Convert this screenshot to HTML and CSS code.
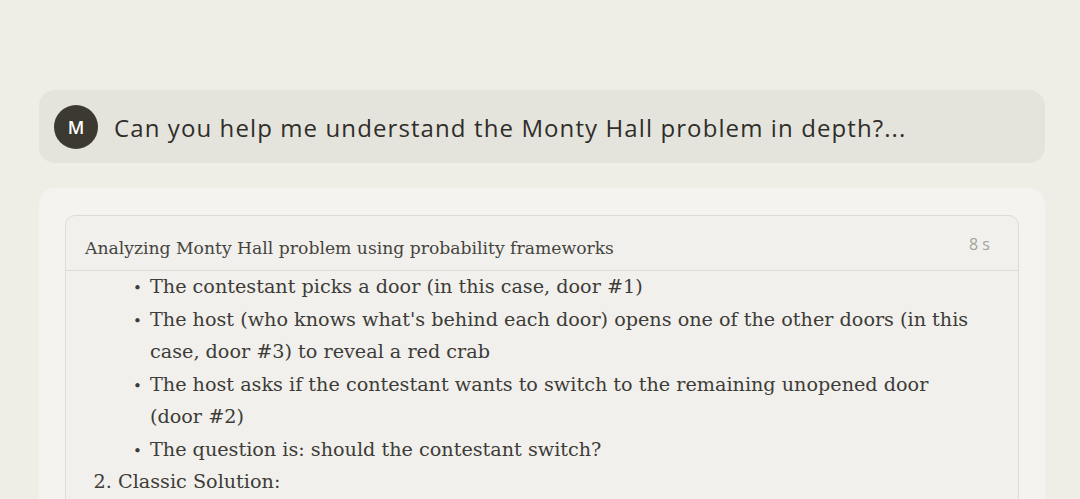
FILE: index.html
```html
<!DOCTYPE html>
<html lang="en">
<head>
  <meta charset="UTF-8">
  <title>Monty Hall</title>
  <link rel="stylesheet" href="styles.css">
</head>
<body>

  <div class="chat">
    <div class="user-msg">
      <div class="avatar">M</div>
      <div class="user-text">Can you help me understand the Monty Hall problem in depth?...</div>
    </div>

    <div class="reply">
      <div class="thinking">
        <div class="thinking-head">
          <span class="thinking-title">Analyzing Monty Hall problem using probability frameworks</span>
          <span class="thinking-time">8 s</span>
        </div>
        <div class="thinking-body">
          <ol class="steps">
            <li class="cont">
              <ul class="points">
                <li>The contestant picks a door (in this case, door #1)</li>
                <li>The host (who knows what's behind each door) opens one of the other doors (in this case, door #3) to reveal a red crab</li>
                <li>The host asks if the contestant wants to switch to the remaining unopened door (door #2)</li>
                <li>The question is: should the contestant switch?</li>
              </ul>
            </li>
            <li value="2">Classic Solution:</li>
          </ol>
        </div>
      </div>
    </div>
  </div>

</body>
</html>
```

FILE: styles.css
```css
:root {
  --page: #eeede6;
  --bubble: #e5e4dc;
  --card: #f4f3ef;
  --box: #f1f0ec;
  --line: #dcdbd4;
  --ink: #3d3c38;
  --muted: #a4a39d;
}

html, body {
  height: 100%;
}

body {
  margin: 0;
  overflow: hidden;
  background-color: var(--page);
  color: var(--ink);
}

.chat {
  padding: 90px 35px 0 39px;
  display: flex;
  flex-direction: column;
  gap: 25px;
}

.user-msg {
  display: flex;
  align-items: center;
  gap: 16px;
  height: 73px;
  padding: 0 15px;
  background-color: var(--bubble);
  border-radius: 16px;
}

.avatar {
  width: 44px;
  height: 44px;
  border-radius: 50%;
  background-color: #3b3930;
  color: #fff;
  display: flex;
  align-items: center;
  justify-content: center;
  font-family: 'Open Sans', sans-serif;
  font-weight: 600;
  font-size: 18px;
  flex-shrink: 0;
}

.user-text {
  font-family: 'Open Sans', sans-serif;
  font-size: 24px;
  letter-spacing: 1.1px;
  color: #2f2e2a;
  padding-top: 2px;
}

.reply {
  background-color: var(--card);
  border-radius: 16px;
  padding: 27px 26px 0 26px;
  height: 400px;
}

.thinking {
  background-color: var(--box);
  border: 1px solid var(--line);
  border-radius: 10px;
  height: 100%;
}

.thinking-head {
  display: flex;
  justify-content: space-between;
  align-items: center;
  height: 54px;
  padding: 0 28px 0 19px;
  border-bottom: 1px solid var(--line);
}

.thinking-title {
  font-family: 'DejaVu Serif', serif;
  font-size: 17.2px;
  color: #45443f;
  padding-top: 10px;
}

.thinking-time {
  font-family: 'Open Sans', sans-serif;
  font-size: 16px;
  color: var(--muted);
  padding-top: 2px;
}

.thinking-body {
  margin: 0 38px 0 19px;
  overflow: hidden;
}

.steps {
  width: 858px;
  margin: 0;
  padding-left: 33px;
  font-family: 'DejaVu Serif', serif;
  font-size: 19.2px;
  line-height: 32.5px;
  color: var(--ink);
}

.steps > li.cont {
  list-style: none;
}

.points {
  margin: 0;
  padding-left: 32px;
  list-style: none;
}

.points li::before {
  content: "\2022";
  display: inline-block;
  width: 17px;
  margin-left: -17px;
  font-size: 15px;
  line-height: 1;
}
```
